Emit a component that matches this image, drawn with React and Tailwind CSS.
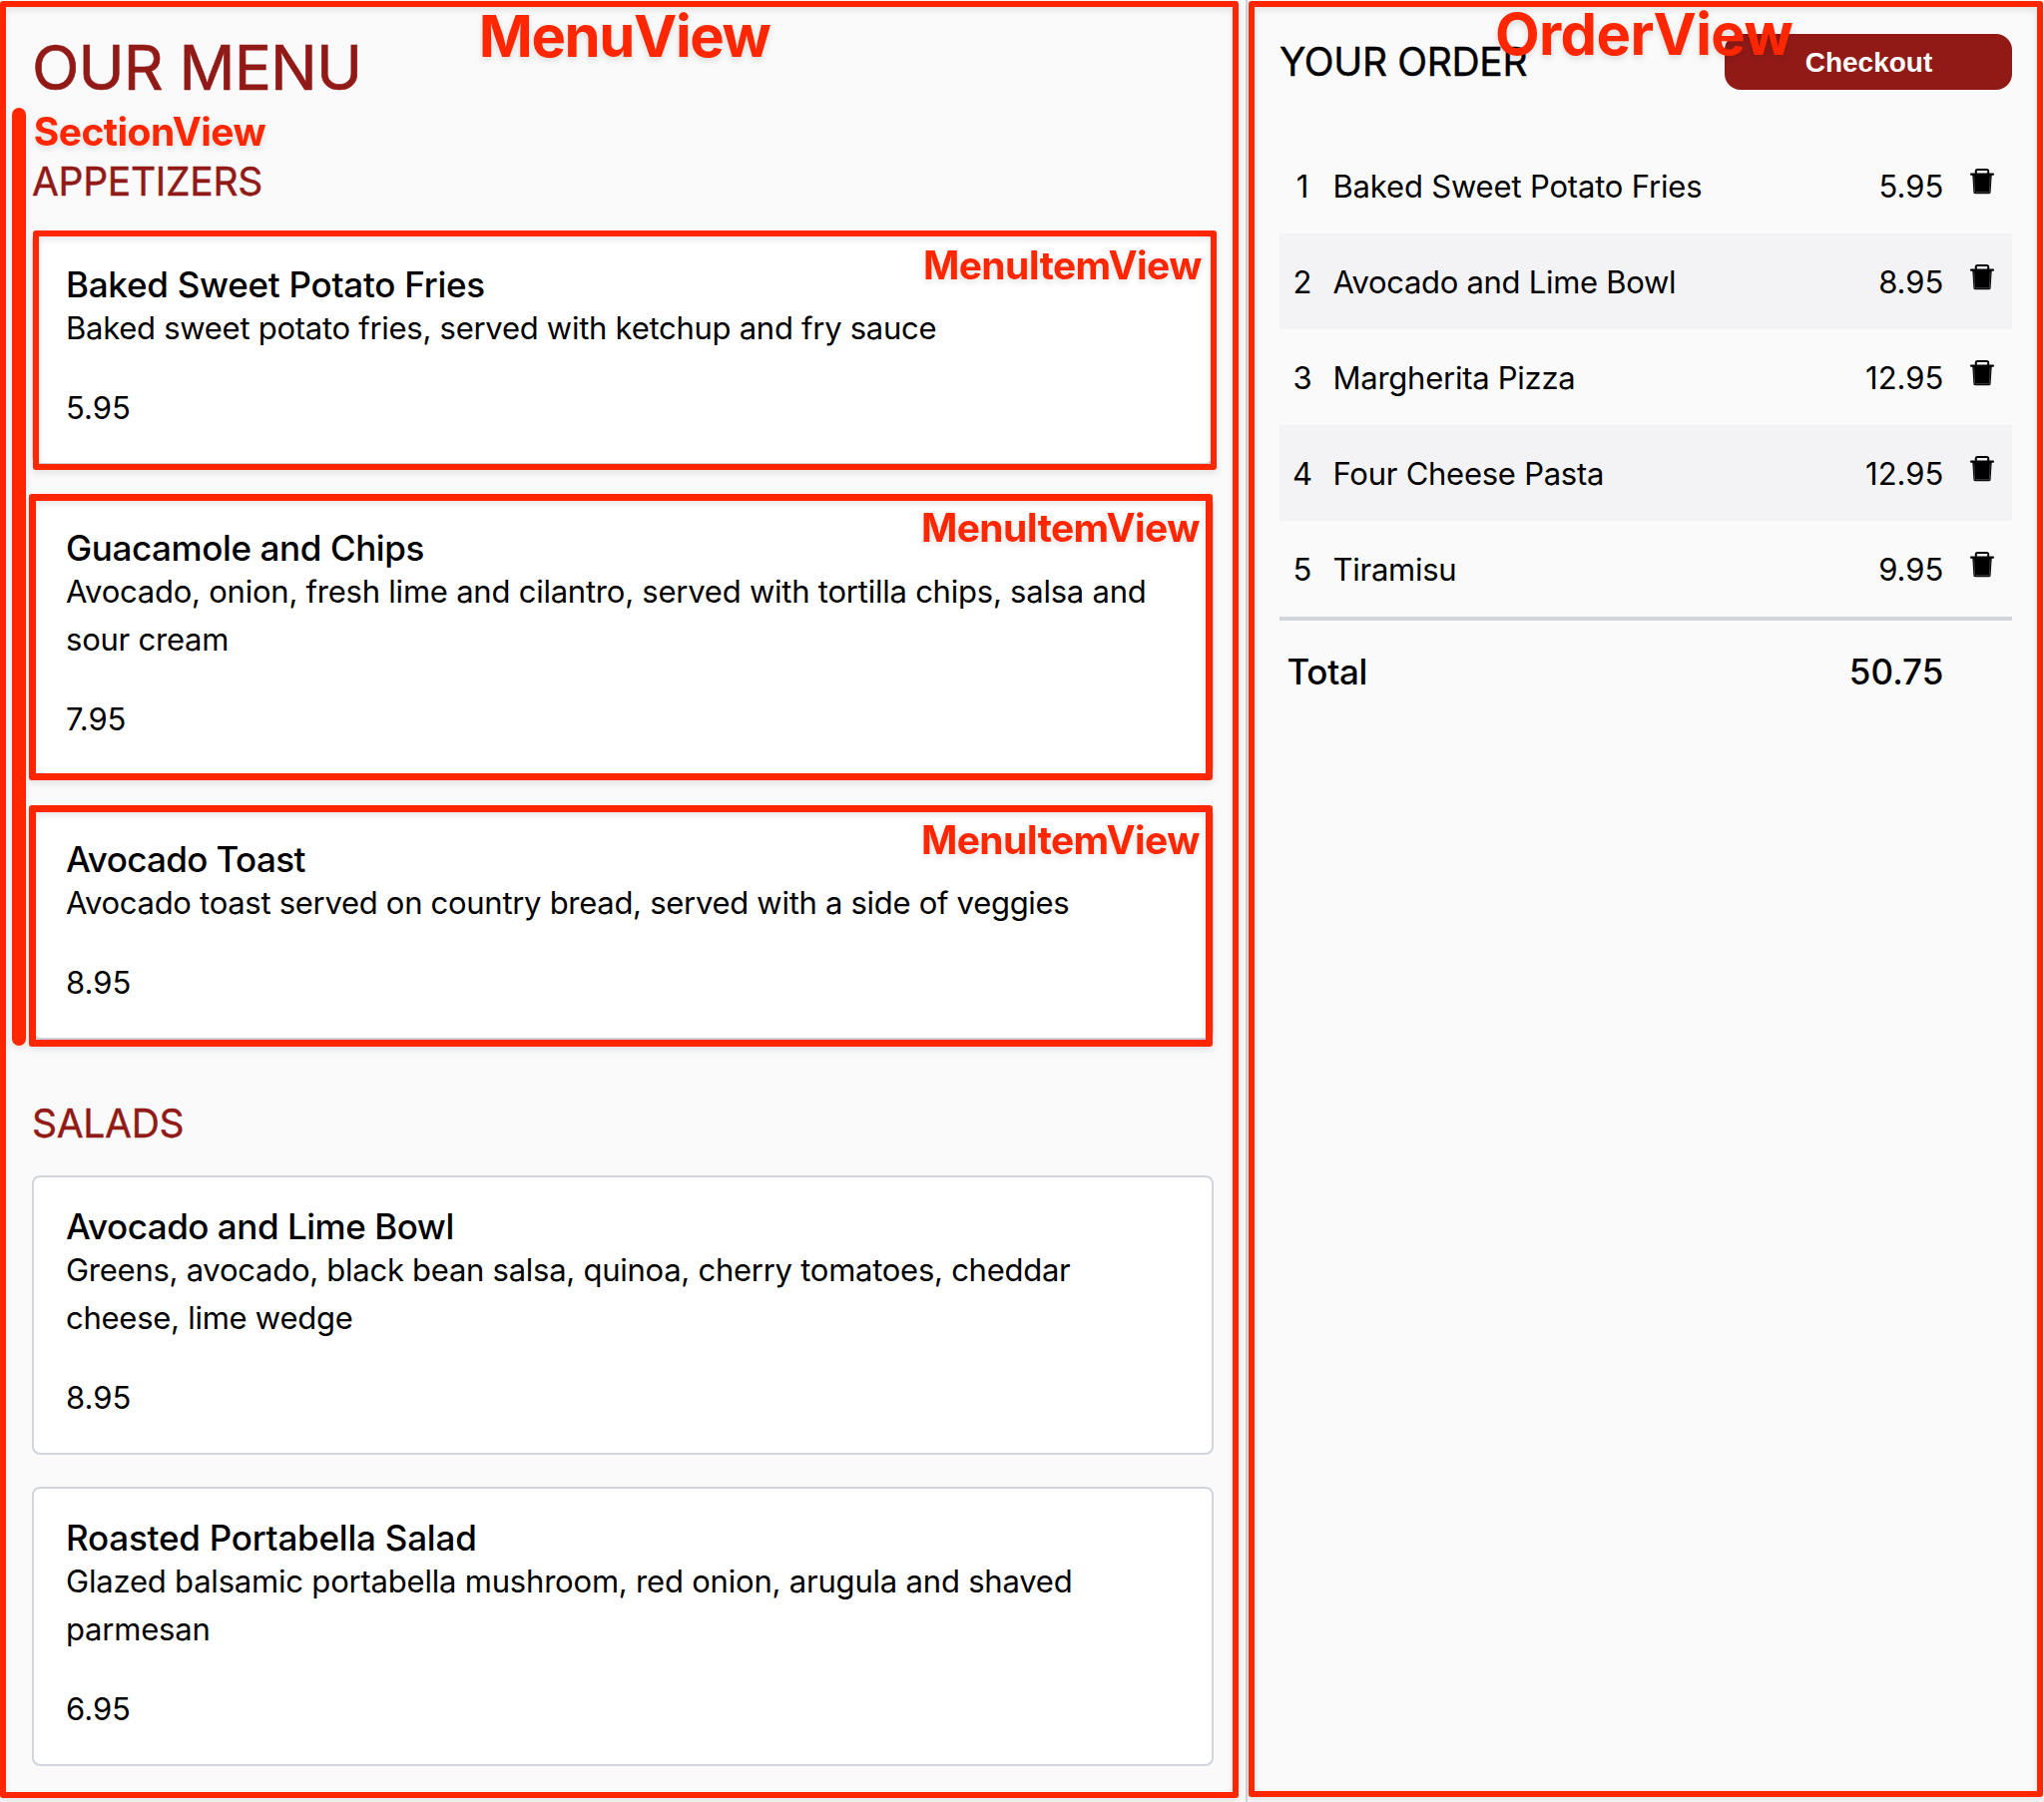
const APPETIZERS = [
  {
    name: "Baked Sweet Potato Fries",
    nameClass: "tracking-[-0.25px]",
    text: "Baked sweet potato fries, served with ketchup and fry sauce",
    textClass: "tracking-[-0.27px]",
    price: "5.95",
    frame: "left-[1px] -top-[3px] h-[240px] w-[1186px] border-[6px]",
    label: "left-[893px] top-[12px]",
  },
  {
    name: "Guacamole and Chips",
    nameClass: "tracking-[-0.39px]",
    text: "Avocado, onion, fresh lime and cilantro, served with tortilla chips, salsa and sour cream",
    textClass: "tracking-[-0.23px]",
    price: "7.95",
    frame: "-left-[3px] -top-[3px] h-[287px] w-[1186px] border-[7px]",
    label: "left-[891px] top-[11px]",
  },
  {
    name: "Avocado Toast",
    nameClass: "tracking-[-0.62px]",
    text: "Avocado toast served on country bread, served with a side of veggies",
    textClass: "tracking-[-0.29px]",
    price: "8.95",
    frame: "-left-[3px] -top-[3px] h-[242px] w-[1186px] border-[7px]",
    label: "left-[891px] top-[12px]",
  },
];

const SALADS = [
  {
    name: "Avocado and Lime Bowl",
    nameClass: "tracking-[-0.46px]",
    text: "Greens, avocado, black bean salsa, quinoa, cherry tomatoes, cheddar cheese, lime wedge",
    textClass: "tracking-[-0.26px]",
    price: "8.95",
  },
  {
    name: "Roasted Portabella Salad",
    nameClass: "tracking-[-0.22px]",
    text: "Glazed balsamic portabella mushroom, red onion, arugula and shaved parmesan",
    textClass: "tracking-[-0.2px]",
    price: "6.95",
  },
];

const ORDER = [
  { name: "Baked Sweet Potato Fries", price: "5.95", nameClass: "tracking-[-0.17px]" },
  { name: "Avocado and Lime Bowl", price: "8.95", nameClass: "tracking-[-0.3px]" },
  { name: "Margherita Pizza", price: "12.95", nameClass: "tracking-[-0.25px]" },
  { name: "Four Cheese Pasta", price: "12.95", nameClass: "tracking-[-0.25px]" },
  { name: "Tiramisu", price: "9.95", nameClass: "tracking-[-0.25px]" },
];

function Frame({ className }) {
  return (
    <div
      className={`pointer-events-none absolute rounded-[3px] border-[#ff2600] drop-shadow-[0_3px_3px_rgba(0,0,0,0.1)] ${className}`}
    />
  );
}

function Label({ className, children }) {
  return (
    <span
      className={`pointer-events-none absolute whitespace-nowrap font-bold text-[#ff2600] drop-shadow-[0_3px_3px_rgba(0,0,0,0.12)] ${className}`}
    >
      {children}
    </span>
  );
}

function TrashIcon() {
  return (
    <svg width="24" height="26" viewBox="0 0 24 26" fill="none" className="block">
      <path d="M5.8 5.5V2.6Q5.8 1 7.4 1H16.6Q18.2 1 18.2 2.6V5.5" stroke="#000" strokeWidth="2" />
      <path d="M1 5.6H23" stroke="#000" strokeWidth="2.1" strokeLinecap="round" />
      <path d="M2.3 6H21.7L20.6 23.4Q20.5 25.3 18.6 25.3H5.4Q3.5 25.3 3.4 23.4Z" fill="#000" />
      <path d="M3.8 7.6L4.7 23.7H19.3L20.2 7.6" stroke="#5a5a5a" strokeWidth="0.7" />
    </svg>
  );
}

function MenuItem({ item }) {
  return (
    <div className="relative">
      <article className="rounded-lg border-2 border-[#d1d5db] bg-white px-8 pt-8 pb-[31px]">
        <h3 className={`mb-[3px] text-[35px] leading-[34px] font-medium ${item.nameClass}`}>{item.name}</h3>
        <p className={`text-[31px] leading-[48px] ${item.textClass}`}>{item.text}</p>
        <p className="mt-8 text-[31px] leading-[48px]">{item.price}</p>
      </article>
      {item.frame && <Frame className={item.frame} />}
      {item.label && (
        <Label className={`text-[39px] leading-[40px] tracking-[-0.6px] ${item.label}`}>MenuItemView</Label>
      )}
    </div>
  );
}

function Section({ title, titleClass, items }) {
  return (
    <section>
      <h2
        className={`mb-7 text-[39px] leading-[48px] text-[#911a17] [-webkit-text-stroke:0.4px_#911a17] ${titleClass}`}
      >
        {title}
      </h2>
      <div className="flex flex-col gap-8">
        {items.map((item) => (
          <MenuItem key={item.name} item={item} />
        ))}
      </div>
    </section>
  );
}

export default function App() {
  return (
    <div className="flex h-[1806px] w-[2048px] overflow-hidden bg-[#fafafa] font-['Inter',sans-serif] text-black">
      <main className="relative w-[1248px] shrink-0 px-8 pt-8">
        <h1 className="mb-[54px] text-[62px] leading-[72px] tracking-[-0.85px] text-[#911a17] [-webkit-text-stroke:0.7px_#911a17]">
          OUR MENU
        </h1>
        <div className="flex flex-col gap-[60px]">
          <Section title="APPETIZERS" titleClass="tracking-[-0.3px]" items={APPETIZERS} />
          <Section title="SALADS" titleClass="tracking-[-0.3px]" items={SALADS} />
        </div>

        <Frame className="left-0 top-px h-[1801px] w-[1241px] border-[6px]" />
        <div className="absolute left-[11.5px] top-[107.5px] h-[940px] w-[14px] rounded-full bg-[#ff2600] drop-shadow-[0_3px_3px_rgba(0,0,0,0.1)]" />
        <Label className="left-[479.8px] top-[7px] text-[58px] leading-[58px] tracking-[-1.4px]">MenuView</Label>
        <Label className="left-[33.7px] top-[112px] text-[39px] leading-[40px] tracking-[-0.54px]">SectionView</Label>
      </main>

      <aside className="relative flex-1 border-l-2 border-[#d1d5db] px-8 pt-[34px]">
        <header className="flex h-14 items-center justify-between">
          <h2 className="text-[39px] leading-[48px] tracking-[-0.35px] [-webkit-text-stroke:0.4px_#000]">YOUR ORDER</h2>
          <button className="h-14 w-72 rounded-2xl bg-[#911a17] pt-px pl-px font-['Liberation_Sans',sans-serif] text-[28px] leading-[32px] font-bold text-white">
            Checkout
          </button>
        </header>

        <ul className="mt-12 text-[31px] leading-[48px]">
          {ORDER.map((row, i) => (
            <li key={row.name} className="flex h-24 items-center pr-[18px] even:bg-[#f3f3f5]">
              <span className="mr-[7.5px] w-[46px] pt-[2px] text-center">{i + 1}</span>
              <span className={`flex-1 pt-[2px] ${row.nameClass}`}>{row.name}</span>
              <span className="pt-[2px]">{row.price}</span>
              <span className="mb-2 ml-[26.6px]">
                <TrashIcon />
              </span>
            </li>
          ))}
        </ul>
        <div className="flex justify-between border-t-4 border-[#d1d5db] pt-[27px] pr-[68.6px] pl-[7.5px] text-[35px] leading-[48px] font-medium">
          <span className="tracking-[-0.3px]">Total</span>
          <span>50.75</span>
        </div>

        <Frame className="left-px top-px h-[1800px] w-[796px] border-[6px]" />
        <Label className="left-[247.9px] top-[5px] text-[58px] leading-[58px] tracking-[-0.6px]">OrderView</Label>
      </aside>
    </div>
  );
}
